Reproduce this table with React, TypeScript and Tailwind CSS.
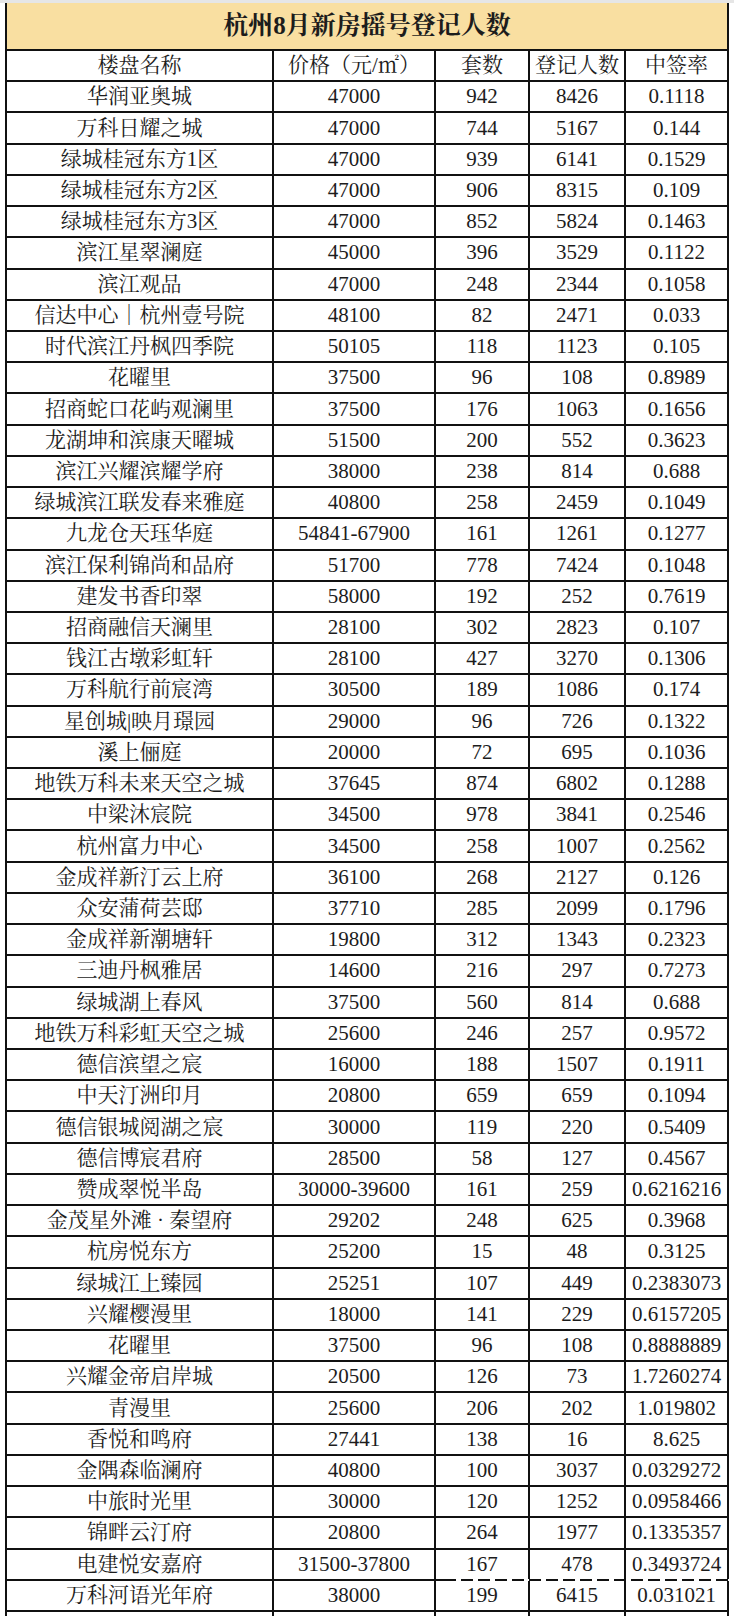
import React from "react";

type Row = [string, string, string, string, string];

const rows: Row[] = [
  ["华润亚奥城", "47000", "942", "8426", "0.1118"],
  ["万科日耀之城", "47000", "744", "5167", "0.144"],
  ["绿城桂冠东方1区", "47000", "939", "6141", "0.1529"],
  ["绿城桂冠东方2区", "47000", "906", "8315", "0.109"],
  ["绿城桂冠东方3区", "47000", "852", "5824", "0.1463"],
  ["滨江星翠澜庭", "45000", "396", "3529", "0.1122"],
  ["滨江观品", "47000", "248", "2344", "0.1058"],
  ["信达中心｜杭州壹号院", "48100", "82", "2471", "0.033"],
  ["时代滨江丹枫四季院", "50105", "118", "1123", "0.105"],
  ["花曜里", "37500", "96", "108", "0.8989"],
  ["招商蛇口花屿观澜里", "37500", "176", "1063", "0.1656"],
  ["龙湖坤和滨康天曜城", "51500", "200", "552", "0.3623"],
  ["滨江兴耀滨耀学府", "38000", "238", "814", "0.688"],
  ["绿城滨江联发春来雅庭", "40800", "258", "2459", "0.1049"],
  ["九龙仓天珏华庭", "54841-67900", "161", "1261", "0.1277"],
  ["滨江保利锦尚和品府", "51700", "778", "7424", "0.1048"],
  ["建发书香印翠", "58000", "192", "252", "0.7619"],
  ["招商融信天澜里", "28100", "302", "2823", "0.107"],
  ["钱江古墩彩虹轩", "28100", "427", "3270", "0.1306"],
  ["万科航行前宸湾", "30500", "189", "1086", "0.174"],
  ["星创城|映月璟园", "29000", "96", "726", "0.1322"],
  ["溪上俪庭", "20000", "72", "695", "0.1036"],
  ["地铁万科未来天空之城", "37645", "874", "6802", "0.1288"],
  ["中梁沐宸院", "34500", "978", "3841", "0.2546"],
  ["杭州富力中心", "34500", "258", "1007", "0.2562"],
  ["金成祥新汀云上府", "36100", "268", "2127", "0.126"],
  ["众安蒲荷芸邸", "37710", "285", "2099", "0.1796"],
  ["金成祥新潮塘轩", "19800", "312", "1343", "0.2323"],
  ["三迪丹枫雅居", "14600", "216", "297", "0.7273"],
  ["绿城湖上春风", "37500", "560", "814", "0.688"],
  ["地铁万科彩虹天空之城", "25600", "246", "257", "0.9572"],
  ["德信滨望之宸", "16000", "188", "1507", "0.1911"],
  ["中天汀洲印月", "20800", "659", "659", "0.1094"],
  ["德信银城阅湖之宸", "30000", "119", "220", "0.5409"],
  ["德信博宸君府", "28500", "58", "127", "0.4567"],
  ["赞成翠悦半岛", "30000-39600", "161", "259", "0.6216216"],
  ["金茂星外滩 · 秦望府", "29202", "248", "625", "0.3968"],
  ["杭房悦东方", "25200", "15", "48", "0.3125"],
  ["绿城江上臻园", "25251", "107", "449", "0.2383073"],
  ["兴耀樱漫里", "18000", "141", "229", "0.6157205"],
  ["花曜里", "37500", "96", "108", "0.8888889"],
  ["兴耀金帝启岸城", "20500", "126", "73", "1.7260274"],
  ["青漫里", "25600", "206", "202", "1.019802"],
  ["香悦和鸣府", "27441", "138", "16", "8.625"],
  ["金隅森临澜府", "40800", "100", "3037", "0.0329272"],
  ["中旅时光里", "30000", "120", "1252", "0.0958466"],
  ["锦畔云汀府", "20800", "264", "1977", "0.1335357"],
  ["电建悦安嘉府", "31500-37800", "167", "478", "0.3493724"],
  ["万科河语光年府", "38000", "199", "6415", "0.031021"],
  ["", "", "", "", ""],
];

const header: Row = ["楼盘名称", "价格（元/㎡）", "套数", "登记人数", "中签率"];

const font = {
  fontFamily:
    '"Liberation Serif", "Noto Serif CJK SC", "Noto Sans CJK SC", serif',
};

function TableRow({ cells, watermark }: { cells: Row; watermark?: boolean }) {
  return (
    <div className="relative grid h-[31.23px] grid-cols-[267px_162px_94px_96px_101px] border-b-2 border-[#111]">
      {cells.map((c, i) => (
        <div
          key={i}
          className={
            "flex items-center justify-center whitespace-nowrap text-[21px] leading-none text-[#1c1c1c] " +
            (i < 4 ? "border-r-2 border-[#111]" : "")
          }
        >
          {c}
        </div>
      ))}
      {watermark && (
        // white dashed watermark strokes lying over the last visible row
        <div className="pointer-events-none absolute -top-[2px] left-[437px] h-[2px] w-[290px] bg-[repeating-linear-gradient(90deg,transparent_0_12px,white_12px_17px)]" />
      )}
    </div>
  );
}

export default function App() {
  return (
    <div className="h-[1616px] w-[734px] overflow-hidden bg-white" style={font}>
      <div className="h-[3px] bg-[#e6e6e6]" />
      <div className="ml-[5px] w-[724px] border-x-2 border-[#111]">
        <div className="flex h-[48px] items-center justify-center border-b-2 border-[#111] bg-[#f9dfa1] text-[25px] font-bold text-[#1c1c1c]">
          杭州8月新房摇号登记人数
        </div>
        <TableRow cells={header} />
        {rows.map((r, i) => (
          <TableRow key={i} cells={r} watermark={i === 48} />
        ))}
      </div>
    </div>
  );
}
